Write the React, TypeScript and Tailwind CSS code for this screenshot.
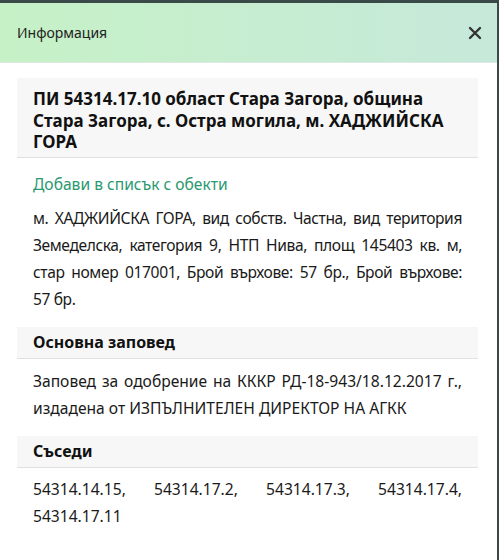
const neighbours = ["54314.14.15", "54314.17.2", "54314.17.3", "54314.17.4", "54314.17.11"];

function SectionHead({ children }: { children: React.ReactNode }) {
  return (
    <div className="h-[32px] flex items-center bg-[#f7f7f7] border-b border-[#e0e0e0] px-4 text-[16px] font-bold text-[#111]">
      {children}
    </div>
  );
}

export default function App() {
  return (
    <div className="w-[499px] h-[560px] bg-[#3a4a48] pt-[3px] pr-[2px] overflow-hidden" style={{ fontFamily: '"Noto Sans", "DejaVu Sans", sans-serif' }}>
      <div className="h-full bg-white flex flex-col">
        <div className="h-[60px] flex items-center justify-between pl-[17px] pr-[15px] bg-gradient-to-r from-[#c6f1c6] to-[#c6e9da] border-b border-[#dfe9e4]">
          <span className="text-[14px] text-[#222]">Информация</span>
          <svg width="14" height="14" viewBox="0 0 14 14" className="text-[#333]">
            <path d="M2 2 L12 12 M12 2 L2 12" stroke="currentColor" strokeWidth="2.4" strokeLinecap="round" />
          </svg>
        </div>

        <div className="px-[17px] pt-[15px]">
          <div className="w-[461px]">
            <div className="bg-[#f7f7f7] border-b border-[#e0e0e0] px-4 pt-[10px] pb-[4px] text-[17px] font-bold text-[#111] leading-[21.5px]">
              ПИ 54314.17.10 област Стара Загора, община Стара Загора, с. Остра могила, м. ХАДЖИЙСКА ГОРА
            </div>

            <div className="px-4 pt-[16px] text-[15.6px] text-[#2a9870] leading-[20px]">Добави в списък с обекти</div>

            <p className="px-4 pt-[11px] pb-[14px] text-[15.6px] tracking-[-0.4px] text-[#1a1a1a] leading-[27px] text-justify">
              м. ХАДЖИЙСКА ГОРА, вид собств. Частна, вид територия Земеделска, категория 9, НТП Нива, площ 145403 кв. м, стар номер 017001, Брой върхове: 57{"\u00a0"}бр., Брой върхове: 57{"\u00a0"}бр.
            </p>

            <SectionHead>Основна заповед</SectionHead>
            <p className="px-4 pt-[9px] pb-[14px] text-[15.6px] text-[#1a1a1a] leading-[27px] text-justify">
              Заповед за одобрение на КККР РД-18-943/18.12.2017 г., издадена от ИЗПЪЛНИТЕЛЕН ДИРЕКТОР НА АГКК
            </p>

            <SectionHead>Съседи</SectionHead>
            <p className="px-4 pt-[8px] text-[15.6px] text-[#1a1a1a] leading-[27px] text-justify">
              {neighbours.join(", ")}
            </p>
          </div>
        </div>
      </div>
    </div>
  );
}
